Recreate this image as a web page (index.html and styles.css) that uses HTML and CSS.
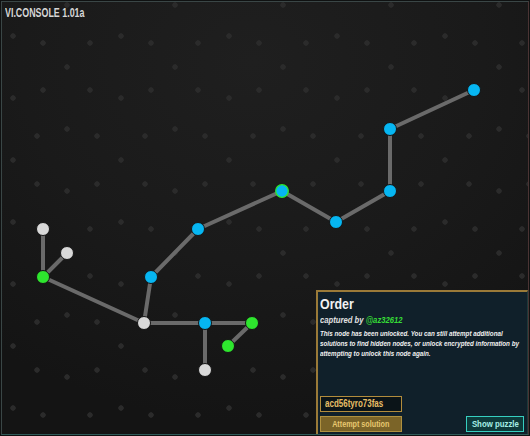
FILE: index.html
```html
<!DOCTYPE html>
<html>
<head>
<meta charset="utf-8">
<link rel="stylesheet" href="styles.css">
</head>
<body>
<div class="console">
  <div class="title"><span class="sx">VI.CONSOLE 1.01a</span></div>
  <svg class="graph" width="526" height="432" viewBox="2 2 526 432" xmlns="http://www.w3.org/2000/svg">
    <g class="edges">
      <line x1="43" y1="229" x2="43" y2="277"/>
      <line x1="67" y1="253" x2="43" y2="277"/>
      <line x1="43" y1="277" x2="144" y2="323"/>
      <line x1="144" y1="323" x2="151" y2="277"/>
      <line x1="151" y1="277" x2="198" y2="229"/>
      <line x1="198" y1="229" x2="282" y2="191"/>
      <line x1="282" y1="191" x2="336" y2="222"/>
      <line x1="336" y1="222" x2="390" y2="191"/>
      <line x1="390" y1="191" x2="390" y2="129"/>
      <line x1="390" y1="129" x2="474" y2="90"/>
      <line x1="144" y1="323" x2="252" y2="323"/>
      <line x1="205" y1="323" x2="205" y2="370"/>
      <line x1="252" y1="323" x2="228" y2="346"/>
    </g>
    <g class="nodes">
      <circle class="n-grey" cx="43" cy="229" r="6.5"/>
      <circle class="n-grey" cx="67" cy="253" r="6.5"/>
      <circle class="n-green" cx="43" cy="277" r="6.5"/>
      <circle class="n-grey" cx="144" cy="323" r="6.5"/>
      <circle class="n-blue" cx="151" cy="277" r="6.5"/>
      <circle class="n-blue" cx="198" cy="229" r="6.5"/>
      <circle class="n-ring" cx="282" cy="191" r="6.3"/>
      <circle class="n-blue" cx="336" cy="222" r="6.5"/>
      <circle class="n-blue" cx="390" cy="191" r="6.5"/>
      <circle class="n-blue" cx="390" cy="129" r="6.5"/>
      <circle class="n-blue" cx="474" cy="90" r="6.5"/>
      <circle class="n-blue" cx="205" cy="323" r="6.5"/>
      <circle class="n-green" cx="252" cy="323" r="6.5"/>
      <circle class="n-green" cx="228" cy="346" r="6.5"/>
      <circle class="n-grey" cx="205" cy="370" r="6.5"/>
    </g>
  </svg>
  <div class="panel">
    <div class="p-title"><span class="sx">Order</span></div>
    <div class="p-captured"><span class="sx">captured by <span class="user">@az32612</span></span></div>
    <div class="p-desc">This node has been unlocked. You can still attempt additional solutions to find hidden nodes, or unlock encrypted information by attempting to unlock this node again.</div>
    <div class="p-input"><span class="sx">acd56tyro73fas</span></div>
    <div class="p-actions">
      <div class="btn btn-attempt"><span class="sc">Attempt solution</span></div>
      <div class="btn btn-show"><span class="sc">Show puzzle</span></div>
    </div>
  </div>
</div>
</body>
</html>
```
FILE: styles.css
```css
html, body {
  margin: 0;
  padding: 0;
  background: #0f1111;
}
body {
  width: 530px;
  height: 436px;
  overflow: hidden;
  font-family: "Liberation Sans", Arial, sans-serif;
}
.sx {
  display: inline-block;
  white-space: nowrap;
  transform: scaleX(0.8);
  transform-origin: 0 0;
}
.sc {
  display: inline-block;
  white-space: nowrap;
  transform: scaleX(0.8);
  transform-origin: 50% 50%;
}
.console {
  position: relative;
  margin: 1px;
  width: 526px;
  height: 432px;
  border: 1px solid #3a4646;
  border-right-color: #4a3434;
  border-bottom-color: #2f5a58;
  overflow: hidden;
  background-color: #181818;
  background-image:
    radial-gradient(circle 3px at 11px 34px, #2b2b2b 2.4px, transparent 3px),
    radial-gradient(circle 3px at 65px 3px, #2b2b2b 2.4px, transparent 3px),
    radial-gradient(circle 3px at 41px 41px, #2b2b2b 2.4px, transparent 3px),
    radial-gradient(circle 3px at 88px 41px, #2b2b2b 2.4px, transparent 3px),
    radial-gradient(circle 3px at 41px 88px, #2b2b2b 2.4px, transparent 3px),
    radial-gradient(circle 3px at 88px 88px, #2b2b2b 2.4px, transparent 3px),
    radial-gradient(circle 3px at 35px 134px, #2b2b2b 2.4px, transparent 3px),
    radial-gradient(circle 3px at 95px 134px, #2b2b2b 2.4px, transparent 3px),
    radial-gradient(circle 3px at 35px 182px, #2b2b2b 2.4px, transparent 3px),
    radial-gradient(circle 3px at 95px 182px, #2b2b2b 2.4px, transparent 3px),
    radial-gradient(ellipse 420px 360px at 250px 60px, #1f1f1f 0%, #1a1a1a 55%, #141414 100%);
  background-size:
    108px 62px, 108px 62px,
    108px 186px, 108px 186px, 108px 186px, 108px 186px,
    108px 186px, 108px 186px, 108px 186px, 108px 186px,
    100% 100%;
  background-repeat: repeat, repeat, repeat, repeat, repeat, repeat, repeat, repeat, repeat, repeat, no-repeat;
}
.title {
  position: relative;
  z-index: 2;
  padding: 4px 0 0 3px;
  font-size: 12px;
  line-height: 14px;
  font-weight: bold;
  color: #d6d6d6;
}
.title .sx {
  transform: scaleX(0.74);
}
.graph {
  position: absolute;
  left: 0;
  top: 0;
}
.edges line {
  stroke: #6a6a6a;
  stroke-width: 4;
  stroke-linecap: round;
}
.nodes circle {
  stroke: #151515;
  stroke-width: 1;
}
.n-grey { fill: #d9d9d9; }
.n-green { fill: #2ee62e; }
.n-blue { fill: #06b6f2; }
.nodes .n-ring { fill: #06b6f2; stroke: #2ee62e; stroke-width: 1.3; }

.panel {
  position: absolute;
  left: 314px;
  top: 288px;
  right: 0;
  bottom: 0;
  box-sizing: border-box;
  display: flex;
  flex-direction: column;
  padding: 3px 3px 2px 2px;
  overflow: hidden;
  background: #10202a;
  border-top: 2px solid #9a7a38;
  border-left: 2px solid #9a7a38;
  border-right: 1px solid #1e3a3a;
}
.p-title {
  font-size: 15.5px;
  line-height: 17px;
  font-weight: bold;
  color: #f2f2f2;
}
.p-captured {
  margin-top: 2px;
  font-size: 9.6px;
  line-height: 12px;
  font-weight: bold;
  font-style: italic;
  color: #e2e2e2;
}
.user {
  color: #36dc36;
}
.p-desc {
  margin-top: 3px;
  width: 257px;
  flex: none;
  font-size: 7.8px;
  line-height: 10px;
  font-weight: bold;
  font-style: italic;
  color: #f0f0f0;
  transform: scaleX(0.8);
  transform-origin: 0 0;
}
.p-input {
  margin-top: auto;
  width: 82px;
  height: 16px;
  box-sizing: border-box;
  border: 1px solid #b28c3c;
  background: #0b1418;
  color: #e6be66;
  font-size: 10px;
  font-weight: bold;
  line-height: 14px;
  padding-left: 4px;
}
.p-actions {
  margin-top: 4px;
  display: flex;
  justify-content: space-between;
  align-items: center;
}
.btn {
  height: 16px;
  box-sizing: border-box;
  display: flex;
  justify-content: center;
  align-items: center;
  font-size: 9px;
  line-height: 14px;
  font-weight: bold;
}
.btn-attempt {
  width: 82px;
  border: 1px solid #b0913f;
  background: #7b6428;
  color: #e8c870;
}
.btn-show {
  width: 58px;
  font-size: 9.8px;
  border: 1px solid #36cfc0;
  background: #0e3a3a;
  color: #a6efe6;
}
```
